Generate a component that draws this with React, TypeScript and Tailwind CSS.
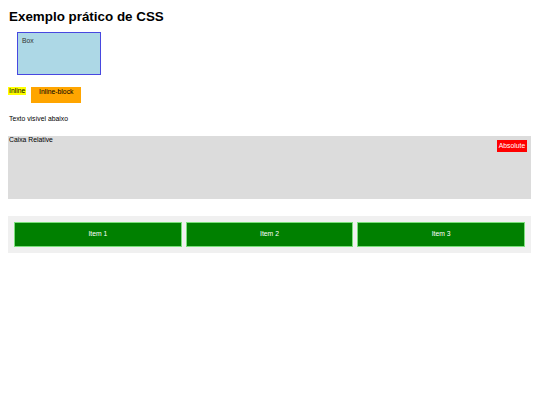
export default function App() {
  return (
    <div className="w-[540px] h-[405px] bg-white pl-2 pr-[9px] pt-[9px] text-black" style={{ fontFamily: '"Liberation Sans", Arial, sans-serif' }}>
      <h1 className="text-[13.4px] font-bold leading-[16px] ml-px">Exemplo prático de CSS</h1>
      <div className="mt-[7px] ml-[9px] w-[84px] h-[43px] border border-[#4848e0] bg-[#add8e6] px-[4px] pt-[4px] text-[6.8px] leading-[8px] text-[#333]">
        Box
      </div>
      <div className="mt-[12px] text-[6.8px] leading-[8px] h-[16px]">
        <span className="bg-[#ffff00] inline-block align-top px-px">Inline</span>
        <span className="inline-block align-top ml-[5px] w-[50px] h-[16px] bg-[#ffa500] text-center pt-px">Inline-block</span>
      </div>
      <div className="mt-[12px] ml-px text-[6.8px] leading-[8px]">Texto visível abaixo</div>
      <div className="relative mt-[13px] h-[63px] bg-[#dcdcdc] text-[6.8px] leading-[8px] pl-px">
        Caixa Relative
        <span className="absolute top-[4px] right-[4px] bg-[#ff0000] text-white h-[12px] leading-[12px] w-[30px] text-center">Absolute</span>
      </div>
      <div className="mt-[17px] bg-[#f0f0f0] p-[6px] flex gap-[4px]">
        {["Item 1", "Item 2", "Item 3"].map((t) => (
          <div key={t} className="flex-1 h-[25px] bg-[#008000] border border-[#7be07b] flex items-center justify-center text-white text-[6.8px]">
            {t}
          </div>
        ))}
      </div>
    </div>
  );
}
